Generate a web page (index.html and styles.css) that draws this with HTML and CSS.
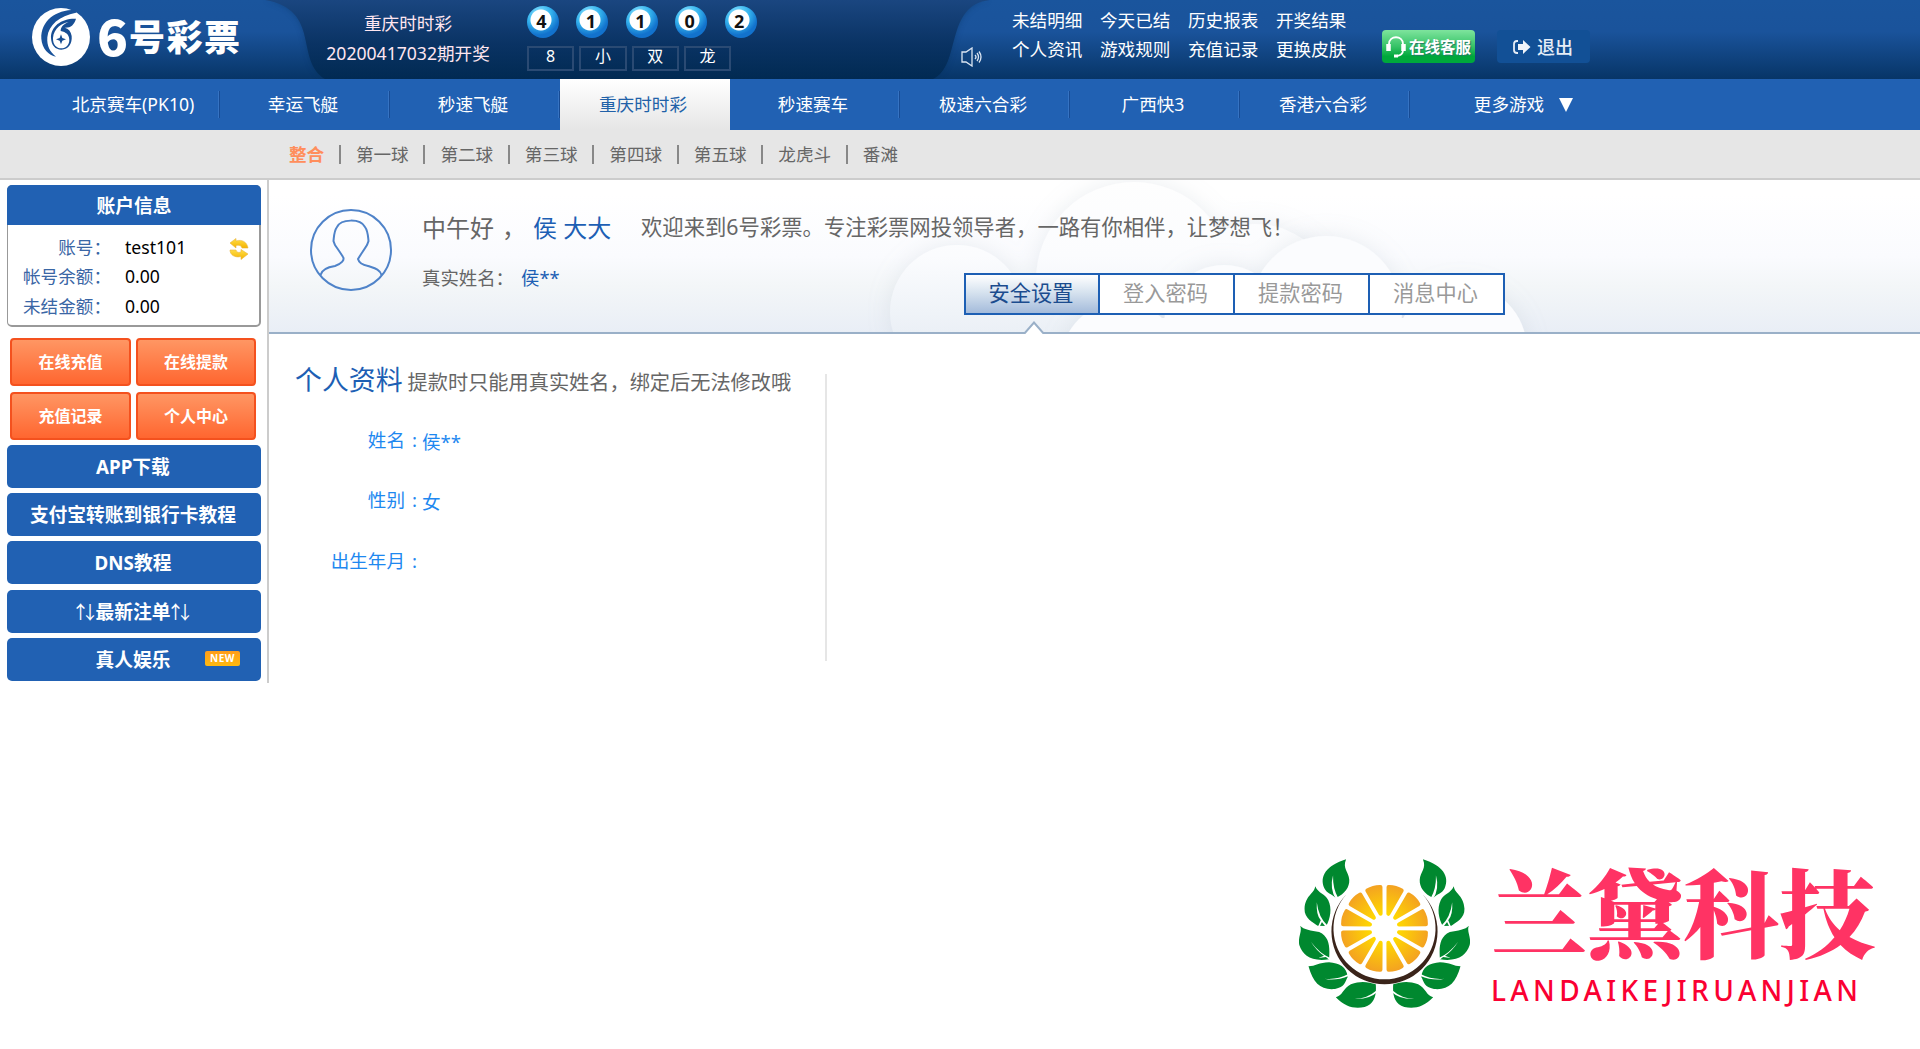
FILE: index.html
```html
<!DOCTYPE html>
<html lang="zh-CN">
<head>
<meta charset="utf-8">
<title>6号彩票</title>
<link rel="stylesheet" href="styles.css">
</head>
<body>
<header class="top">
  <svg class="top-bg" width="1920" height="79" viewBox="0 0 1920 79">
    <defs>
      <linearGradient id="gl" x1="0" y1="0" x2="0" y2="1"><stop offset="0" stop-color="#1a559d"/><stop offset=".4" stop-color="#1a539b"/><stop offset="1" stop-color="#073567"/></linearGradient>
      <linearGradient id="gd" x1="0" y1="0" x2="0" y2="1"><stop offset="0" stop-color="#1a4680"/><stop offset=".55" stop-color="#0a3364"/><stop offset="1" stop-color="#012a52"/></linearGradient>
      <filter id="soft" x="-5%" y="-20%" width="110%" height="140%"><feGaussianBlur stdDeviation="3"/></filter>
    </defs>
    <rect width="1920" height="79" fill="url(#gl)"/>
    <path d="M265 0C322 10 294 60 325 79H933C962 66 944 5 990 0Z" fill="#022a55" opacity=".35" filter="url(#soft)"/>
    <path d="M265 0C322 10 294 60 325 79H933C962 66 944 5 990 0Z" fill="url(#gd)"/>
  </svg>
  <svg class="logo" width="250" height="79" viewBox="0 0 250 79">
    <g transform="translate(20 0) scale(.3333)">
      <circle cx="123" cy="111" r="87" fill="#fff"/>
      <path d="M168 29C108 28 62 62 64 116C66 146 86 166 108 170C90 156 80 138 82 112C86 74 118 48 168 38Z" fill="#19529a"/>
      <path d="M168 56C126 54 92 78 93 114C94 136 106 149 124 149C146 148 157 130 155 108C153 94 146 86 134 83C152 84 163 74 168 56Z" fill="#174e94"/>
      <path d="M146 66C128 68 101 84 99 114C98 134 110 145 124 145C138 145 148 134 148 120C148 104 138 96 122 93C122 82 130 72 146 66Z" fill="#fff"/>
      <path d="M123 103L127 114L138 118L127 122L123 133L119 122L108 118L119 114Z" fill="#174d92"/>
    </g>
    <text class="logo-6" x="97" y="56" textLength="31" lengthAdjust="spacingAndGlyphs">6</text>
    <text class="logo-cn" x="129" y="51" textLength="111">号彩票</text>
  </svg>
  <div class="draw">重庆时时彩<br>20200417032期开奖</div>
  <div class="result">
    <div class="balls"><span class="ball">4</span><span class="ball">1</span><span class="ball">1</span><span class="ball">0</span><span class="ball">2</span></div>
    <div class="tags"><span>8</span><span>小</span><span>双</span><span>龙</span></div>
  </div>
  <svg class="speaker" width="21" height="20" viewBox="0 0 21 20" fill="none" stroke="#dbe5f2" stroke-width="1.3"><path d="M1 5H5L11 1V19L5 15H1Z"/><path d="M14 8Q16 10 14 12M16 6Q19 10 16 14M18 4.500Q22 10 18 15.500"/></svg>
  <div class="links"><a>未结明细</a><a>今天已结</a><a>历史报表</a><a>开奖结果</a><a>个人资讯</a><a>游戏规则</a><a>充值记录</a><a>更换皮肤</a></div>
  <a class="btn service"><svg width="22" height="24" viewBox="0 0 22 24" fill="none" stroke="#fff" stroke-width="1.800"><path d="M4 12V9C4 0 18 0 18 9V12M18 15Q18 20 12 21"/><path d="M3.500 9V16M18.500 9V16" stroke-width="4.500"/><path d="M9 21H13" stroke-width="3"/></svg>在线客服</a>
  <a class="btn exit"><svg width="18" height="18" viewBox="0 0 18 18"><path d="M5 3H4Q1 3 1 6V12Q1 15 4 15H5" fill="none" stroke="#e6edf6" stroke-width="1.800"/><path d="M5 6H10V2L17.500 9L10 16V12H5Z" fill="#f0f4fa"/></svg>退出</a>
</header>
<nav class="nav"><a>北京赛车(PK10)</a><a>幸运飞艇</a><a>秒速飞艇</a><a class="on">重庆时时彩</a><a>秒速赛车</a><a>极速六合彩</a><a>广西快3</a><a>香港六合彩</a><a class="more">更多游戏<i></i></a></nav>
<div class="sub"><a class="on">整合</a><a>第一球</a><a>第二球</a><a>第三球</a><a>第四球</a><a>第五球</a><a>龙虎斗</a><a>番滩</a></div>
<div class="body">
  <aside class="side">
    <section class="account">
      <h2>账户信息</h2>
      <dl><dt>账号：</dt><dd>test101</dd><dt>帐号余额：</dt><dd>0.00</dd><dt>未结金额：</dt><dd>0.00</dd></dl>
      <svg class="refresh" width="20" height="22" viewBox="0 0 20 22"><defs><linearGradient id="gy" x1="0" y1="0" x2="0" y2="1"><stop offset="0" stop-color="#ffdf4a"/><stop offset="1" stop-color="#f5b400"/></linearGradient></defs><g fill="url(#gy)" stroke="#e9b33c" stroke-width=".6"><path d="M1 5L7 .500V3C13 1 18 4 19 10H13C12 7 10 7 7 7.500V10Z"/><path d="M19 16L12 21.500V18.500C6 20 1 17 1 12H7C8 15 10 14.500 12 14V11.500Z"/></g></svg>
    </section>
    <div class="quick"><a>在线充值</a><a>在线提款</a><a>充值记录</a><a>个人中心</a></div>
    <div class="menu"><a>APP下载</a><a>支付宝转账到银行卡教程</a><a>DNS教程</a><a><span class="arr">↑↓</span>最新注单<span class="arr">↑↓</span></a><a>真人娱乐<b class="new">NEW</b></a></div>
  </aside>
  <main class="main">
    <section class="banner">
      <svg class="clouds" width="700" height="152" viewBox="860 180 700 152">
        <defs>
          <linearGradient id="gc" gradientUnits="userSpaceOnUse" x1="0" y1="180" x2="0" y2="332"><stop offset="0" stop-color="#fefefe"/><stop offset=".5" stop-color="#fbfcfe"/><stop offset="1" stop-color="#ebf0f6"/></linearGradient>
          <filter id="sh" x="-30%" y="-30%" width="160%" height="160%"><feDropShadow dx="0" dy="0" stdDeviation="11" flood-color="#a6b2c0" flood-opacity=".22"/></filter>
        </defs>
        <g fill="url(#gc)">
          <g filter="url(#sh)"><circle cx="1134" cy="280" r="98"/><circle cx="957" cy="312" r="67"/><circle cx="1255" cy="308" r="84"/><rect x="960" y="285" width="300" height="80"/></g>
          <g fill="#fbfcfe" filter="url(#sh)"><circle cx="1326" cy="312" r="76"/><circle cx="1224" cy="325" r="60"/><circle cx="1121" cy="362" r="60"/><circle cx="1461" cy="350" r="66"/><rect x="1120" y="318" width="340" height="40"/></g>
        </g>
      </svg>
      <svg class="avatar" width="82" height="82" viewBox="0 0 82 82" fill="none" stroke="#4f83c9" stroke-width="2"><circle cx="41" cy="41" r="40"/><path d="M10.500 66C12 60 18 58 25 57C31 55 35 51 33 48C30 43 27 39 25 36L23.500 32C24 27 24 22 27 18C31 10 50 9 55 18C58 22 58 27 58.500 32L57 36C54 41 51 45 48 50C49 54 53 56 58 57C64 59 70 60 71.500 66"/></svg>
      <div class="hello">
        <div class="hi"><span class="time">中午好<i>，</i></span><span class="who">侯 大大</span><span class="wel">欢迎来到6号彩票。专注彩票网投领导者，一路有你相伴，让梦想飞！</span></div>
        <div class="real"><span>真实姓名：</span><span class="who2">侯**</span></div>
      </div>
      <div class="tabs"><a class="on">安全设置</a><a>登入密码</a><a>提款密码</a><a>消息中心</a></div>
      <svg class="notch" width="22" height="13" viewBox="0 0 22 13"><path d="M1 13L11 1.500L21 13" fill="#fff" stroke="#9ab0c8" stroke-width="2"/></svg>
    </section>
    <section class="info">
      <h3>个人资料<small>提款时只能用真实姓名，绑定后无法修改哦</small></h3>
      <p><span>姓名<i>:</i></span><em>侯**</em></p>
      <p><span>性别<i>:</i></span><em>女</em></p>
      <p><span>出生年月<i>:</i></span></p>
    </section>
  </main>
</div>
<div class="brand">
  <svg width="171" height="150" viewBox="49 56 432 450" preserveAspectRatio="none">
    <defs>
      <radialGradient id="go" gradientUnits="userSpaceOnUse" cx="0" cy="0" r="45"><stop offset=".3" stop-color="#ffd900"/><stop offset="1" stop-color="#f3a023"/></radialGradient>
      <g id="leaves">
        <g fill="#00882f"><path d="M168 57C118 76 100 108 113 144C120 160 130 160 142 173C165 160 177 140 176 118C175 95 158 85 168 57Z"/><path d="M90 138C88 160 65 165 63 205C62 235 85 245 96 256L118 257C128 235 133 205 123 180C115 160 98 160 90 138Z"/><path d="M52 256C58 275 45 290 50 315C58 345 80 365 125 357C127 320 127 290 100 275C80 270 60 268 52 256Z"/><path d="M73 378C90 378 100 366 125 366C150 368 170 380 172 410C165 425 165 440 140 446C105 450 85 430 73 378Z"/><path d="M142 471C160 465 160 445 180 432C205 420 225 425 243 432C245 465 240 490 215 500C190 507 165 500 142 471Z"/></g>
        <path d="M135 105Q126 145 142 176L148 173Q134 145 135 105ZM94 186Q92 225 104 240L97 259H101L107 245L117 261L122 257Q98 232 94 186ZM79 304Q94 332 112 346L98 353L117 350L126 359L129 354Q100 338 79 304ZM114 415Q140 423 176 406L174 401Q145 419 114 415ZM190 476Q226 478 246 456L243 452Q222 474 190 476Z" fill="#fff"/>
      </g>
      <path id="seg" d="M0-15L-6.800-41Q0-43 6.800-41Z" fill="url(#go)" stroke="url(#go)" stroke-width="4" stroke-linejoin="round"/>
    </defs>
    <use href="#leaves"/><use href="#leaves" transform="matrix(-1 0 0 1 530 0)"/>
    <g transform="translate(265 264) scale(2.529 3)">
      <path fill="#3a241a" fill-rule="evenodd" d="M-38-34A53 53 0 1 0 38-34A51 51 0 1 1-38-34Z"/>
      <g id="half"><use href="#seg" transform="rotate(15)"/><use href="#seg" transform="rotate(45)"/><use href="#seg" transform="rotate(75)"/><use href="#seg" transform="rotate(105)"/><use href="#seg" transform="rotate(135)"/><use href="#seg" transform="rotate(165)"/></g>
      <use href="#half" transform="rotate(180)"/>
    </g>
  </svg>
  <svg class="brand-name" width="390" height="150" viewBox="0 0 390 150">
    <text class="brand-cn" x="0" y="91" textLength="384">兰黛科技</text>
    <text class="brand-en" x="0" y="142" textLength="367">LANDAIKEJIRUANJIAN</text>
  </svg>
</div>
</body>
</html>
```
FILE: styles.css
```css
* { box-sizing: border-box; }
body { margin: 0; width: 1920px; height: 1049px; position: relative; overflow: hidden; background: #fff; font: 17.6px/30px "Noto Sans", "Noto Sans CJK SC", sans-serif; color: #666; }
a, span { white-space: nowrap; }
i, em { font-style: normal; }

.top { position: relative; height: 79px; display: flex; color: #fff; }
.top > * { position: relative; flex: none; }
.top .top-bg { position: absolute; left: 0; top: 0; }
.logo text { fill: #fff; font-family: "Noto Sans CJK SC", sans-serif; font-weight: 900; }
.logo-6 { font-size: 49px; }
.logo-cn { font-size: 36px; }
.draw { width: 316px; margin-right: -39px; padding-top: 8px; text-align: center; color: #ffe6f0; }
.result { width: 435px; padding-top: 6px; }
.balls { display: flex; gap: 17.4px; }
.ball { width: 32px; height: 32px; border-radius: 50%; background: radial-gradient(circle at 14px 14px, #fff 10px, transparent 11px), radial-gradient(circle at 12px 8px, #8fe4ff 0, #35b4ee 12px, #1272cd 21px); color: #111; font: bold 18px/30px "Noto Sans", sans-serif; text-align: center; padding-right: 3px; }
.tags { display: flex; gap: 5px; margin-top: 8px; }
.tags span { width: 47.3px; height: 25px; border: 2px solid #2a4a73; line-height: 17px; font-size: 16px; text-align: center; }
.speaker { margin: 47px 0 0 -1px; }
.links { display: grid; grid-template-columns: repeat(4, 88px); grid-template-rows: 29px 29px; margin: 5px 0 0 30px; width: 370px; }
.btn { display: flex; align-items: center; height: 33px; margin-top: 30px; border-radius: 4px; font-weight: bold; }
.service { width: 93px; padding-left: 3px; gap: 2px; font-size: 15.5px; line-height: 30px; background: linear-gradient(#7ee49d, #36c367 50%, #00a83b 80%); text-shadow: 1px 1px 1px #276; }
.exit { width: 93px; margin-left: 22px; padding-left: 16px; gap: 6px; font-size: 18px; font-weight: 500; color: #e6edf6; background: #125096; }

.nav { height: 51px; padding-left: 50px; display: flex; background: #2161b3; color: #fff; }
.nav a { width: 170px; padding-right: 4px; line-height: 51px; text-align: center; background: linear-gradient(90deg, #3673c2 50%, #174b94 50%) right 0 top 12px / 2px 27px no-repeat; }
.nav a.on { background: linear-gradient(#fff, #e6e6e6); color: #2161a8; }
.nav a.more { background: none; }
.nav .more { width: 231px; display: flex; align-items: center; justify-content: center; gap: 15px; }
.more i { border: 7px solid transparent; border-top: 14px solid #fff; border-bottom: 0; }

.sub { height: 50px; padding-left: 289px; border-bottom: 2px solid #ccc; background: #e6e6e6; display: flex; align-items: center; line-height: 48px; }
.sub a + a::before { content: ""; display: inline-block; width: 2px; height: 19px; margin: 0 15px 0 14.700px; vertical-align: -3px; background: #888; }
.sub .on { color: #ff8e5c; font-weight: bold; }

.body { display: flex; height: 503px; }
.side { width: 269px; padding: 5px 0 0 7px; border-right: 2px solid #ccc; color: #fff; }
.account { position: relative; width: 254px; height: 142px; border: 1px solid #999; border-right-width: 2px; border-bottom-width: 2px; border-radius: 5px; }
.account h2 { margin: -1px -2px 0 -1px; height: 40px; border-radius: 5px 5px 0 0; background: #2161b3; font-size: 18.75px; line-height: 42px; text-align: center; }
.account dl { margin: 7px 0 0 0; display: grid; grid-template-columns: 103px 1fr; grid-auto-rows: 29.3px; column-gap: 14px; }
.account dt { color: #3a66a5; text-align: right; white-space: nowrap; }
.account dd { margin: 0; color: #000; }
.refresh { position: absolute; left: 221px; top: 52px; }
.quick { width: 246px; margin: 11px 0 5px 3px; display: grid; grid-template-columns: 121px 120px; gap: 6px 5px; }
.quick a { height: 48px; border: 2px solid #f4511e; border-radius: 4px; background: linear-gradient(#ff9663, #ff6630); font-weight: bold; font-size: 16px; line-height: 45px; text-align: center; }
.menu { width: 254px; display: grid; gap: 5.2px; }
.menu a { position: relative; height: 43px; padding-right: 2px; border-radius: 5px; background: #2161b3; font-weight: bold; font-size: 18.75px; line-height: 43px; text-align: center; }
.arr { font: 18px/40px "Noto Sans CJK SC", sans-serif; letter-spacing: -8.500px; margin: 0 5px 0 -4px; }
.new { position: absolute; left: 198px; top: 13px; width: 35px; height: 15px; border-radius: 2px; background: linear-gradient(#ff9c1a, #ffb90f); font: bold 10px/15px "Open Sans", sans-serif; letter-spacing: .5px; }

.main { width: 1651px; }
.banner { position: relative; height: 154px; border-bottom: 2px solid #9ab0c8; background: linear-gradient(#fff 10%, #fafbfe 50%, #f3f6f8 70%, #e9eef6); }
.clouds { position: absolute; left: 591px; top: 0; }
.avatar { position: absolute; left: 41px; top: 29px; }
.hello { position: relative; padding: 30px 0 0 153px; }
.hi { display: flex; height: 36px; line-height: 36px; }
.time { width: 111px; font-size: 24px; }
.time i { margin-left: 8px; }
.who { width: 108px; font-size: 24px; color: #1d5fb4; }
.wel { font-size: 21.350px; line-height: 33px; }
.real { display: flex; margin-top: 17px; font-size: 18.400px; }
.real span { width: 99px; }
.real .who2 { color: #1d5fb4; }
.tabs { position: absolute; left: 695px; top: 93px; width: 541px; height: 42px; border: 2px solid #1d5fb4; display: flex; background: #fff; }
.tabs a { flex: 1; padding-right: 2px; text-align: center; font-size: 21.200px; line-height: 36px; color: #999; border-left: 2px solid #1d5fb4; }
.tabs .on { border: 0; flex: 0 0 132px; color: #1b4c8e; background: linear-gradient(#fff, #d7e3ef 45%, #a4bbdb); }
.notch { position: absolute; left: 754px; top: 141px; }
.info { width: 558px; height: 287px; margin-top: 40px; border-right: 2px solid #e6e6e6; }
.info h3 { margin: 0 0 36px 26px; height: 1px; font-size: 26.900px; font-weight: 400; line-height: 12px; color: #1d5fb4; white-space: nowrap; }
.info small { margin-left: 5px; font-size: 20.200px; color: #666; }
.info p { margin: 0; height: 60.300px; display: flex; font-size: 18.600px; line-height: 58px; color: #1e88f0; }
.info p span { width: 148px; text-align: right; }
.info p i { margin-left: 7px; }
.info p em { margin: 2px 0 0 5px; }

.brand { position: absolute; left: 1299px; top: 859px; display: flex; gap: 21px; }
.brand-name { overflow: visible; }
.brand-cn { fill: #ff3364; font: 900 96px "Noto Serif CJK SC", "Noto Sans CJK SC", serif; }
.brand-en { fill: #fa0032; font: 500 28px "Noto Sans", sans-serif; }
```
